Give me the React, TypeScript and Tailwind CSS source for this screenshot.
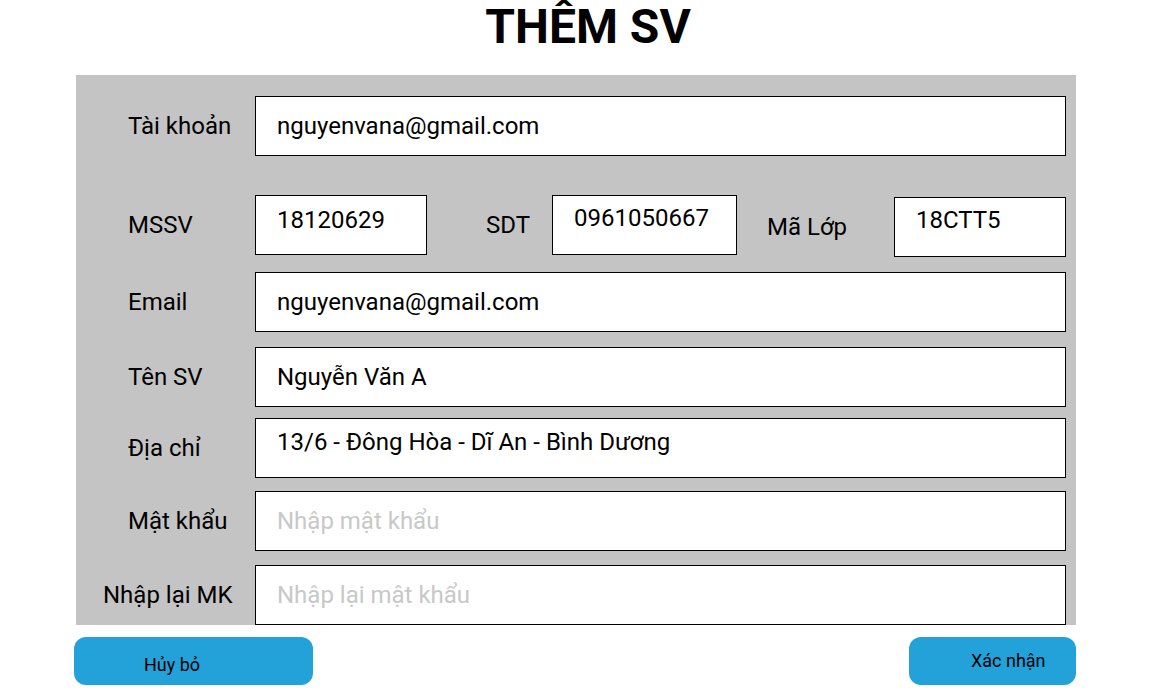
const font = { fontFamily: "Roboto, 'Noto Sans', sans-serif" }

function Field({
  value,
  placeholder,
  className = "",
}: {
  value?: string
  placeholder?: string
  className?: string
}) {
  return (
    <input
      readOnly
      defaultValue={value}
      placeholder={placeholder}
      className={`h-[60px] border border-black bg-white pl-[21px] text-[24px] text-black outline-none placeholder:text-[#c8c8c8] ${className}`}
    />
  )
}

function Row({ label, children, labelClass = "pl-[52px]", className = "" }: any) {
  return (
    <div className={`flex items-center ${className}`}>
      <div className={`w-[179px] shrink-0 whitespace-nowrap text-[24px] text-black ${labelClass}`}>{label}</div>
      {children}
    </div>
  )
}

export default function App() {
  return (
    <div className="min-h-screen w-[1152px] bg-white" style={font}>
      <div className="flex h-[75px] justify-center pt-[2px] pl-6">
        <h1 className="text-[48px] font-bold leading-[50px] text-black">THÊM SV</h1>
      </div>

      <div className="ml-[76px] flex h-[550px] w-[1000px] flex-col bg-[#c4c4c4] pt-[21px]">
        <Row label="Tài khoản">
          <Field value="nguyenvana@gmail.com" className="w-[811px]" />
        </Row>

        <div className="mt-[39px] flex items-start">
          <div className="flex h-[60px] w-[179px] shrink-0 items-center pl-[52px] text-[24px]">MSSV</div>
          <Field value="18120629" className="w-[172px] pb-[10px]" />
          <div className="ml-[59px] flex h-[60px] w-[66px] items-center text-[24px]">SDT</div>
          <Field value="0961050667" className="w-[185px] pb-[15px]" />
          <div className="mt-[2px] ml-[30px] flex h-[60px] w-[127px] items-center text-[24px]">Mã Lớp</div>
          <Field value="18CTT5" className="mt-[2px] w-[172px] pb-[14px]" />
        </div>

        <Row label="Email" className="mt-[15px]">
          <Field value="nguyenvana@gmail.com" className="w-[811px]" />
        </Row>

        <Row label="Tên SV" className="mt-[15px]">
          <Field value="Nguyễn Văn A" className="w-[811px]" />
        </Row>

        <Row label="Địa chỉ" className="mt-[11px]">
          <Field value="13/6 - Đông Hòa - Dĩ An - Bình Dương" className="w-[811px] pb-[12px]" />
        </Row>

        <Row label="Mật khẩu" className="mt-[13px]">
          <Field placeholder="Nhập mật khẩu" className="w-[811px]" />
        </Row>

        <Row label="Nhập lại MK" labelClass="pl-[27px]" className="mt-[14px]">
          <Field placeholder="Nhập lại mật khẩu" className="w-[811px]" />
        </Row>
      </div>

      <div className="mt-[12px] flex w-[1076px] justify-between pl-[74px]">
        <button className="flex h-[48px] w-[239px] items-center rounded-[12px] bg-[#22a2d9] pt-[7px] pl-[70px] text-[18px] text-black">
          Hủy bỏ
        </button>
        <button className="flex h-[48px] w-[167px] items-center rounded-[12px] bg-[#22a2d9] pb-[2px] pl-[62px] text-[18px] text-black">
          Xác nhận
        </button>
      </div>
    </div>
  )
}
